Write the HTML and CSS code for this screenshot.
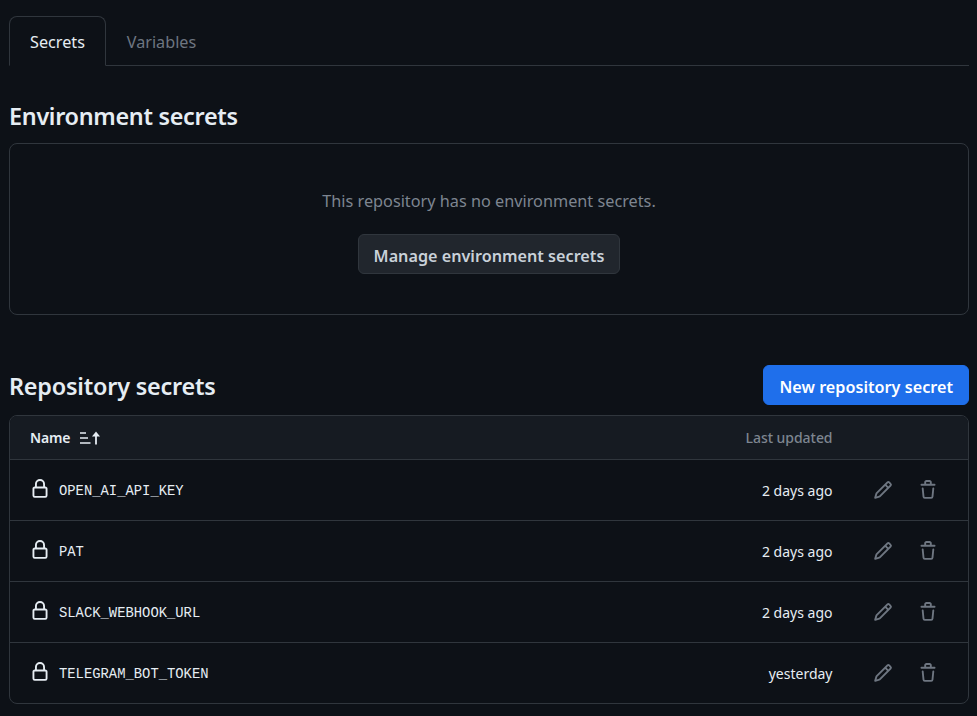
FILE: index.html
```html
<!DOCTYPE html>
<html lang="en">
<head>
<meta charset="utf-8">
<title>Secrets</title>
<link rel="stylesheet" href="styles.css">
</head>
<body>
<svg class="defs" width="0" height="0" aria-hidden="true">
  <symbol id="lock" viewBox="0 0 16 16"><path d="M4 4a4 4 0 0 1 8 0v2h.25c.966 0 1.75.784 1.75 1.75v5.5A1.75 1.75 0 0 1 12.25 15h-8.5A1.75 1.75 0 0 1 2 13.25v-5.5C2 6.784 2.784 6 3.75 6H4Zm8.25 3.5h-8.5a.25.25 0 0 0-.25.25v5.5c0 .138.112.25.25.25h8.5a.25.25 0 0 0 .25-.25v-5.5a.25.25 0 0 0-.25-.25ZM10.500 6V4a2.500 2.500 0 1 0-5 0v2Z"/></symbol>
  <symbol id="pencil" viewBox="0 0 16 16"><path d="M11.013 1.427a1.750 1.750 0 0 1 2.474 0l1.086 1.086a1.750 1.750 0 0 1 0 2.474l-8.610 8.610c-.210.210-.470.364-.756.445l-3.251.930a.750.750 0 0 1-.927-.928l.929-3.250c.081-.286.235-.547.445-.758l8.610-8.610Zm.176 4.823L9.750 4.810l-6.286 6.287a.253.253 0 0 0-.064.108l-.558 1.953 1.953-.558a.253.253 0 0 0 .108-.064Zm1.238-3.763a.250.250 0 0 0-.354 0L10.811 3.750l1.439 1.440 1.263-1.263a.250.250 0 0 0 0-.354Z"/></symbol>
  <symbol id="trash" viewBox="0 0 16 16"><path d="M11 1.750V3h2.250a.750.750 0 0 1 0 1.500H2.750a.750.750 0 0 1 0-1.500H5V1.750C5 .784 5.784 0 6.750 0h2.500C10.216 0 11 .784 11 1.750ZM4.496 6.675l.660 6.600a.250.250 0 0 0 .249.225h5.190a.250.250 0 0 0 .249-.225l.660-6.600a.750.750 0 0 1 1.492.149l-.660 6.600A1.748 1.748 0 0 1 10.595 15h-5.190a1.750 1.750 0 0 1-1.741-1.575l-.660-6.600a.750.750 0 1 1 1.492-.150ZM6.500 1.750V3h3V1.750a.250.250 0 0 0-.250-.250h-2.500a.250.250 0 0 0-.250.250Z"/></symbol>
</svg>

<nav class="tabs">
  <a class="tab tab-active">Secrets</a>
  <a class="tab">Variables</a>
</nav>

<h2 class="heading env-heading">Environment secrets</h2>
<section class="blank">
  <p class="blank-text">This repository has no environment secrets.</p>
  <a class="btn">Manage environment secrets</a>
</section>

<header class="repo-head">
  <h2 class="heading repo-heading">Repository secrets</h2>
  <a class="btn btn-primary">New repository secret</a>
</header>

<section class="table">
  <div class="row row-head">
    <div class="name-head">Name
      <svg class="sort" width="22" height="16" viewBox="0 0 22 16" aria-hidden="true">
        <path d="M1 3h6M1 8h8M1 13h10.500" stroke="currentColor" stroke-width="1.400" fill="none"/>
        <path d="M17 14.500V3" stroke="currentColor" stroke-width="1.800" fill="none"/>
        <path d="M13 6.500 17 1.500l4 5Z" fill="currentColor"/>
      </svg>
    </div>
    <div class="updated updated-head">Last updated</div>
    <div class="actions"></div>
  </div>
  <div class="row">
    <div class="name"><svg class="lock"><use href="#lock"/></svg><code class="key">OPEN_AI_API_KEY</code></div>
    <div class="updated">2 days ago</div>
    <div class="actions"><svg class="act"><use href="#pencil"/></svg><svg class="act"><use href="#trash"/></svg></div>
  </div>
  <div class="row">
    <div class="name"><svg class="lock"><use href="#lock"/></svg><code class="key">PAT</code></div>
    <div class="updated">2 days ago</div>
    <div class="actions"><svg class="act"><use href="#pencil"/></svg><svg class="act"><use href="#trash"/></svg></div>
  </div>
  <div class="row">
    <div class="name"><svg class="lock"><use href="#lock"/></svg><code class="key">SLACK_WEBHOOK_URL</code></div>
    <div class="updated">2 days ago</div>
    <div class="actions"><svg class="act"><use href="#pencil"/></svg><svg class="act"><use href="#trash"/></svg></div>
  </div>
  <div class="row">
    <div class="name"><svg class="lock"><use href="#lock"/></svg><code class="key">TELEGRAM_BOT_TOKEN</code></div>
    <div class="updated">yesterday</div>
    <div class="actions"><svg class="act"><use href="#pencil"/></svg><svg class="act"><use href="#trash"/></svg></div>
  </div>
</section>
</body>
</html>
```
FILE: styles.css
```css
* { box-sizing: border-box; }
html, body { margin: 0; height: 100%; }
body {
  background: #0d1117;
  color: #e6edf3;
  font-family: "Noto Sans", "Liberation Sans", sans-serif;
  padding: 16px 8px 0 9px;
  overflow: hidden;
}
.defs { position: absolute; }
.tabs {
  display: flex;
  height: 50px;
  border-bottom: 1px solid #30363d;
}
.tab {
  display: flex;
  align-items: center;
  justify-content: center;
  width: 97px;
  height: 50px;
  padding-top: 1px;
  font-size: 16.200px;
  color: #6e7681;
  border: 1px solid transparent;
}
.tab + .tab { width: 111px; }
.tab-active {
  color: #e6edf3;
  border-color: #30363d;
  border-bottom-color: #0d1117;
  border-radius: 8px 8px 0 0;
}
.heading {
  margin: 0;
  font-size: 23.400px;
  font-weight: 600;
  line-height: 32px;
  letter-spacing: -0.3px;
}
.env-heading { margin-top: 34px; }
.repo-heading { padding-top: 2px; letter-spacing: -0.2px; }
.blank {
  margin-top: 11px;
  height: 172px;
  border: 1px solid #30363d;
  border-radius: 8px;
  display: flex;
  flex-direction: column;
  align-items: center;
  padding-top: 45px;
}
.blank-text {
  margin: 0;
  font-size: 16.250px;
  line-height: 24px;
  color: #7d8590;
}
.btn {
  display: flex;
  align-items: center;
  justify-content: center;
  height: 40px;
  padding: 3px 15px 0;
  font-size: 16.200px;
  font-weight: 600;
  color: #c9d1d9;
  background: #21262d;
  border: 1px solid #30363d;
  border-radius: 6px;
  margin-top: 21px;
}
.btn-primary {
  margin-top: 0;
  padding: 3px 15px 0 16px;
  color: #fff;
  background: #1f6feb;
  border-color: #1f6feb;
}
.repo-head {
  display: flex;
  justify-content: space-between;
  align-items: center;
  margin-top: 50px;
  height: 40px;
}
.table {
  margin-top: 10px;
  border: 1px solid #30363d;
  border-radius: 8px;
  overflow: hidden;
}
.row {
  display: flex;
  align-items: center;
  height: 61px;
  padding-left: 20px;
  border-bottom: 1px solid #30363d;
}
.row:last-child { height: 60px; border-bottom: 0; }
.row-head {
  height: 44px;
  background: #161b22;
  font-size: 14px;
}
.name, .name-head {
  flex: 1;
  display: flex;
  align-items: center;
}
.name-head { font-weight: 600; gap: 9px; color: #e6edf3; letter-spacing: -0.2px; }
.sort { color: #e6edf3; }
.lock { width: 20px; height: 20px; fill: #e6edf3; margin-right: 9px; margin-top: -3px; }
.key {
  font-family: "Liberation Mono", "DejaVu Sans Mono", monospace;
  font-size: 13.850px;
  color: #e6edf3;
  padding-top: 1px;
}
.updated {
  font-size: 14px;
  color: #e6edf3;
  text-align: right;
}
.updated-head { color: #7d8590; font-weight: 500; letter-spacing: -0.05px; }
.actions {
  width: 135.500px;
  display: flex;
  gap: 25px;
  padding-left: 40.500px;
  flex-shrink: 0;
}
.act { width: 20px; height: 20px; fill: #6e7681; }
```
